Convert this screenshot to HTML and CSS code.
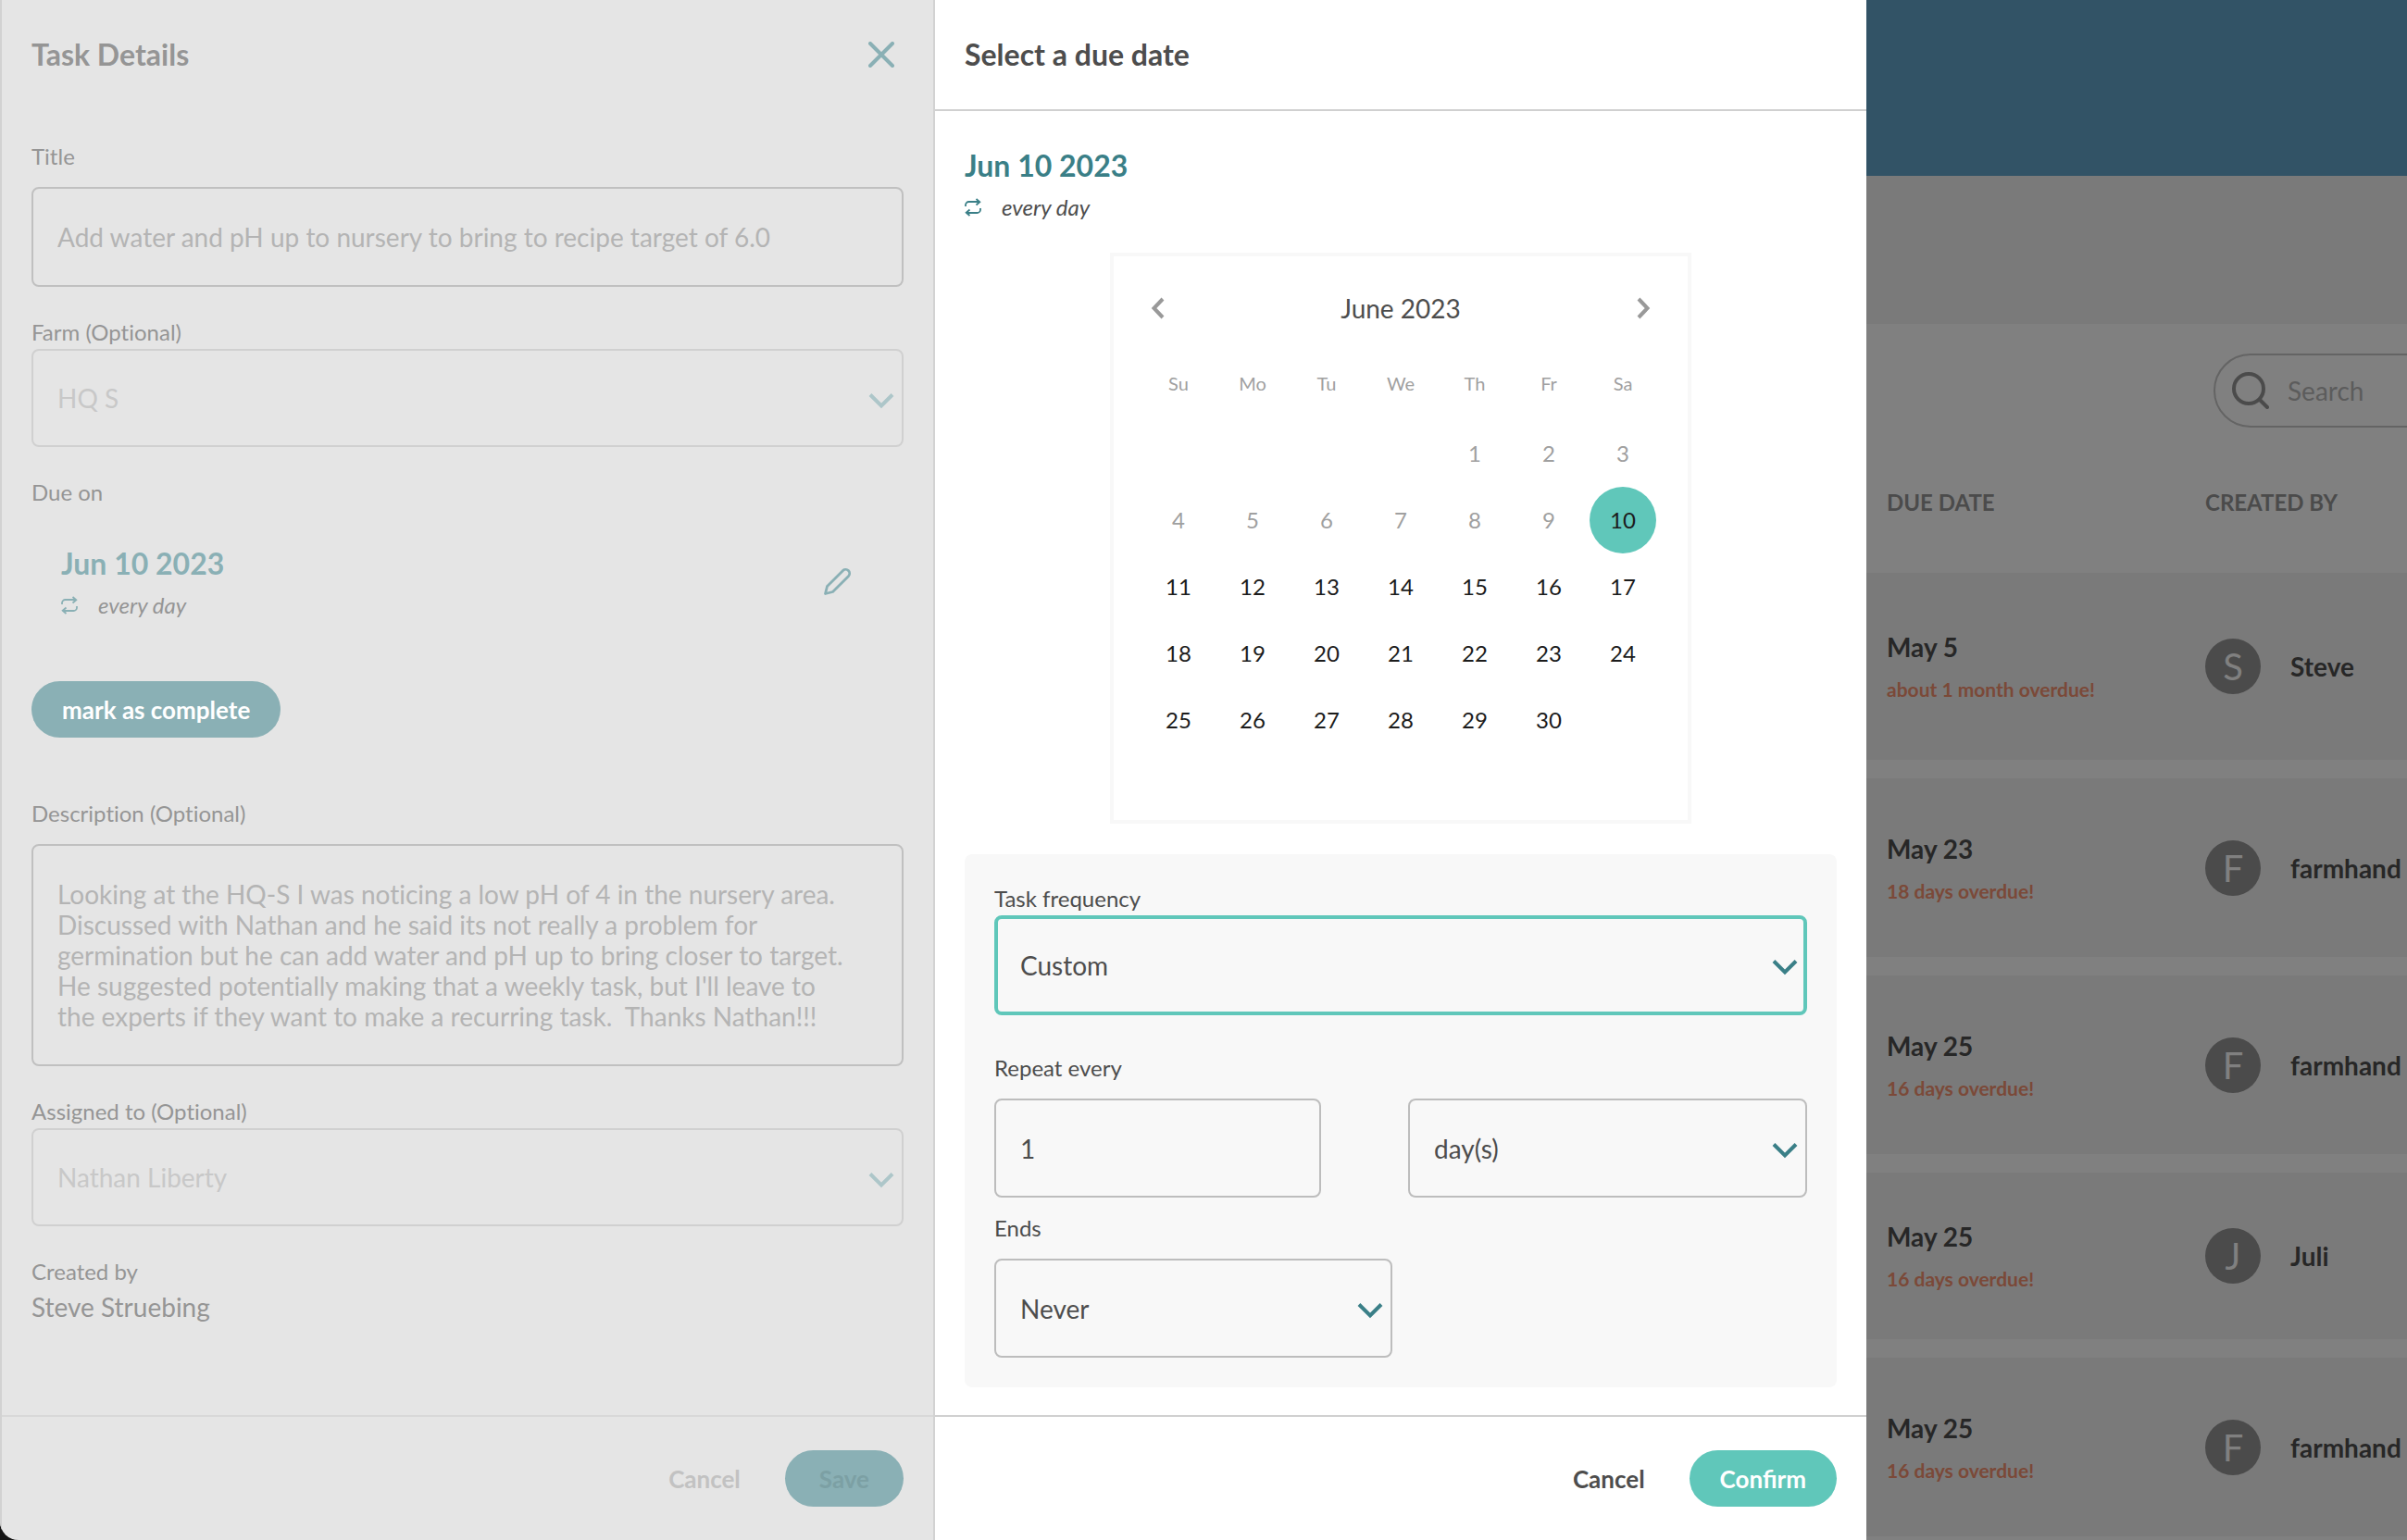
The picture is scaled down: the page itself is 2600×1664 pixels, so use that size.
FILE: index.html
```html
<!DOCTYPE html>
<html lang="en">
<head>
<meta charset="utf-8">
<title>Task Details</title>
<link rel="stylesheet" href="styles.css">
</head>
<body>
<svg class="sprite" aria-hidden="true">
  <symbol id="chevron" viewBox="0 0 28 18"><path d="M2 2.500l12 12 12-12" fill="none" stroke="currentColor" stroke-width="4"/></symbol>
  <symbol id="repeat" viewBox="0 0 18 20"><path d="M1 9V7.500A3.500 3.500 0 0 1 4.500 4H16M12.500 1L16.300 4.200 12.500 7.500M17 11v1.500A3.500 3.500 0 0 1 13.500 16H2M5.500 12.500L1.700 15.800 5.500 19" fill="none" stroke="currentColor" stroke-width="1.800"/></symbol>
</svg>
<div class="app">
  <aside class="drawer details">
    <header class="drawer-head">
      <h2>Task Details</h2>
      <button class="icon-button" type="button" aria-label="Close">
        <svg width="28" height="28" viewBox="0 0 28 28"><path d="M2 2l24 24M26 2L2 26" fill="none" stroke="currentColor" stroke-width="4" stroke-linecap="round"/></svg>
      </button>
    </header>
    <form class="drawer-body" id="task-form">
      <div class="field spaced">
        <label for="title">Title</label>
        <input class="control text" id="title" type="text" value="Add water and pH up to nursery to bring to recipe target of 6.0">
      </div>
      <div class="field">
        <label for="farm">Farm (Optional)</label>
        <div class="select">
          <select class="control" id="farm" disabled><option>HQ S</option></select>
          <svg class="chevron"><use href="#chevron"/></svg>
        </div>
      </div>
      <div class="due">
        <p class="label">Due on</p>
        <div class="due-row">
          <div class="summary">
            <p class="date">Jun 10 2023</p>
            <p class="repeat"><svg width="18" height="20"><use href="#repeat"/></svg><em>every day</em></p>
          </div>
          <button class="icon-button edit" type="button" aria-label="Edit due date">
            <svg width="30" height="30" viewBox="0 0 30 30"><path d="M1.500 28.500l2-8L20.600 3.400a4.250 4.250 0 0 1 6 6L9.500 26.500z" fill="none" stroke="currentColor" stroke-width="2.800" stroke-linejoin="round"/></svg>
          </button>
        </div>
        <button class="pill" type="button">mark as complete</button>
      </div>
      <div class="field spaced">
        <label for="description">Description (Optional)</label>
        <textarea class="control" id="description">Looking at the HQ-S I was noticing a low pH of 4 in the nursery area. Discussed with Nathan and he said its not really a problem for germination but he can add water and pH up to bring closer to target. He suggested potentially making that a weekly task, but I'll leave to the experts if they want to make a recurring task.  Thanks Nathan!!!</textarea>
      </div>
      <div class="field">
        <label for="assignee">Assigned to (Optional)</label>
        <div class="select">
          <select class="control" id="assignee" disabled><option>Nathan Liberty</option></select>
          <svg class="chevron"><use href="#chevron"/></svg>
        </div>
      </div>
      <div class="creator">
        <p class="label">Created by</p>
        <p class="value">Steve Struebing</p>
      </div>
    </form>
    <footer class="drawer-foot">
      <button class="plain" type="button">Cancel</button>
      <button class="pill" type="submit" form="task-form" disabled>Save</button>
    </footer>
  </aside>

  <section class="drawer picker">
    <header class="drawer-head">
      <h2>Select a due date</h2>
    </header>
    <form class="drawer-body" id="date-form">
      <div class="summary">
        <p class="date">Jun 10 2023</p>
        <p class="repeat"><svg width="18" height="20"><use href="#repeat"/></svg><em>every day</em></p>
      </div>
      <div class="calendar">
        <div class="month">
          <button class="icon-button" type="button" aria-label="Previous month"><svg width="16" height="24" viewBox="0 0 16 24"><path d="M13 2L3.500 12 13 22" fill="none" stroke="currentColor" stroke-width="4"/></svg></button>
          <span>June 2023</span>
          <button class="icon-button" type="button" aria-label="Next month"><svg width="16" height="24" viewBox="0 0 16 24"><path d="M3 2l9.500 10L3 22" fill="none" stroke="currentColor" stroke-width="4"/></svg></button>
        </div>
        <table class="days">
          <thead><tr><th>Su</th><th>Mo</th><th>Tu</th><th>We</th><th>Th</th><th>Fr</th><th>Sa</th></tr></thead>
          <tbody>
            <tr><td></td><td></td><td></td><td></td><td><button type="button" disabled>1</button></td><td><button type="button" disabled>2</button></td><td><button type="button" disabled>3</button></td></tr>
            <tr><td><button type="button" disabled>4</button></td><td><button type="button" disabled>5</button></td><td><button type="button" disabled>6</button></td><td><button type="button" disabled>7</button></td><td><button type="button" disabled>8</button></td><td><button type="button" disabled>9</button></td><td><button type="button" class="selected">10</button></td></tr>
            <tr><td><button type="button">11</button></td><td><button type="button">12</button></td><td><button type="button">13</button></td><td><button type="button">14</button></td><td><button type="button">15</button></td><td><button type="button">16</button></td><td><button type="button">17</button></td></tr>
            <tr><td><button type="button">18</button></td><td><button type="button">19</button></td><td><button type="button">20</button></td><td><button type="button">21</button></td><td><button type="button">22</button></td><td><button type="button">23</button></td><td><button type="button">24</button></td></tr>
            <tr><td><button type="button">25</button></td><td><button type="button">26</button></td><td><button type="button">27</button></td><td><button type="button">28</button></td><td><button type="button">29</button></td><td><button type="button">30</button></td><td></td></tr>
            <tr><td></td><td></td><td></td><td></td><td></td><td></td><td></td></tr>
          </tbody>
        </table>
      </div>
      <div class="frequency">
        <div class="field">
          <label for="frequency">Task frequency</label>
          <div class="select">
            <select class="control active" id="frequency"><option>Custom</option></select>
            <svg class="chevron"><use href="#chevron"/></svg>
          </div>
        </div>
        <div class="field spaced interval">
          <label for="count">Repeat every</label>
          <div class="interval-row">
            <input class="control" id="count" type="text" value="1">
            <div class="select">
              <select class="control" id="unit" aria-label="Repeat unit"><option>day(s)</option></select>
              <svg class="chevron"><use href="#chevron"/></svg>
            </div>
          </div>
        </div>
        <div class="field spaced">
          <label for="ends">Ends</label>
          <div class="select half">
            <select class="control" id="ends"><option>Never</option></select>
            <svg class="chevron"><use href="#chevron"/></svg>
          </div>
        </div>
      </div>
    </form>
    <footer class="drawer-foot">
      <button class="plain" type="button">Cancel</button>
      <button class="pill" type="submit" form="date-form">Confirm</button>
    </footer>
  </section>

  <main class="list">
    <div class="banner"></div>
    <div class="toolbar"></div>
    <label class="search">
      <svg width="40" height="40" viewBox="0 0 40 40"><circle cx="18" cy="18" r="16" fill="none" stroke="currentColor" stroke-width="4"/><path d="M30 30l8 8" stroke="currentColor" stroke-width="4" stroke-linecap="round"/></svg>
      <input type="search" placeholder="Search" aria-label="Search">
    </label>
    <table class="tasks">
      <thead><tr><th>DUE DATE</th><th>CREATED BY</th></tr></thead>
      <tbody>
        <tr class="tall"><td><p>May 5</p><p class="overdue">about 1 month overdue!</p></td><td><div class="person"><span class="avatar">S</span>Steve</div></td></tr>
        <tr><td><p>May 23</p><p class="overdue">18 days overdue!</p></td><td><div class="person"><span class="avatar">F</span>farmhand</div></td></tr>
        <tr><td><p>May 25</p><p class="overdue">16 days overdue!</p></td><td><div class="person"><span class="avatar">F</span>farmhand</div></td></tr>
        <tr class="short"><td><p>May 25</p><p class="overdue">16 days overdue!</p></td><td><div class="person"><span class="avatar">J</span>Juli</div></td></tr>
        <tr><td><p>May 25</p><p class="overdue">16 days overdue!</p></td><td><div class="person"><span class="avatar">F</span>farmhand</div></td></tr>
      </tbody>
    </table>
  </main>
</div>
</body>
</html>
```
FILE: styles.css
```css
* { box-sizing: border-box; }

body {
  margin: 0;
  background: #151515;
  color: #4d4d4d;
  font: 28px/36px Lato, "Open Sans", sans-serif;
  font-variant-ligatures: none;
}

h2, p { margin: 0; }

button, input, select, textarea {
  font: inherit;
  font-variant-ligatures: inherit;
  color: inherit;
}

button {
  padding: 0;
  border: 0;
  background: none;
}

.sprite {
  position: absolute;
  width: 0;
  height: 0;
}

.app {
  display: grid;
  grid-template-columns: 1010fr 1006fr 584fr;
  min-height: 100vh;
  overflow: hidden;
  border-bottom-left-radius: 20px;
}

/* Drawers */
.drawer {
  --accent: #3a7f87;
  --line: #bdbdbd;
  --rule: #d0d0d0;
  display: flex;
  flex-direction: column;
  min-width: 0;
  background: #fff;
}

.details {
  --accent: #8ab0b5;
  --line: #c0c0c0;
  border: solid #d2d2d2;
  border-width: 0 2px;
  background: #e5e5e5;
  color: #959595;
}

.drawer-head {
  display: flex;
  align-items: center;
  justify-content: space-between;
  height: 120px;
  padding: 0 32px;
  border-bottom: 2px solid var(--rule);
}

.details .drawer-head {
  padding-right: 42px;
  border-color: transparent;
}

.drawer-head h2 {
  font-size: 32px;
  line-height: 40px;
  font-weight: 700;
}

.icon-button {
  display: flex;
  align-items: center;
  justify-content: center;
  color: var(--accent);
}

.drawer-body {
  flex: 1;
  padding: 33px 32px 29px;
}

.picker .drawer-body { padding-top: 39px; }

.drawer-foot {
  display: flex;
  justify-content: flex-end;
  gap: 48px;
  padding: 36px 32px;
  border-top: 2px solid var(--rule);
}

.details .drawer-foot { border-color: #d8d8d8; }

.plain, .pill {
  height: 61px;
  font-size: 26px;
  line-height: 32px;
  font-weight: 700;
  font-variant-ligatures: normal;
}

.pill {
  padding: 0 33px;
  border-radius: 31px;
  background: #60c7ba;
  color: #fff;
}

.details .pill { background: var(--accent); }
.details .pill:disabled { padding: 0 37px; color: #7ca0a4; }
.details .plain { color: #c2c2c2; }

/* Form fields */
.field {
  display: flex;
  flex-direction: column;
  gap: 2px;
}

.field.spaced { gap: 17px; }

label, .label {
  font-size: 24px;
  line-height: 32px;
}

.control {
  display: block;
  width: 100%;
  height: 107px;
  padding: 0 26px;
  border: 2px solid var(--line);
  border-radius: 8px;
  outline: 0;
  background: transparent;
  appearance: none;
}

.control.text { height: 108px; }

.control.active {
  height: 108px;
  padding: 0 24px;
  border: 4px solid #60c7ba;
}

.details .control { color: #b4b4b4; }

.control:disabled {
  height: 106px;
  border-color: #d0d0d0;
  opacity: 1;
}

.details .control:disabled { color: #c8c8c8; }

textarea.control {
  height: 240px;
  padding: 36px 52px 36px 26px;
  line-height: 33px;
  resize: none;
  overflow: hidden;
}

.select { position: relative; }

.chevron {
  position: absolute;
  right: 10px;
  top: 47px;
  width: 28px;
  height: 18px;
  color: var(--accent);
  pointer-events: none;
}

.details .chevron { color: #adc6c9; }

.details .field { margin-bottom: 33px; }

.date {
  color: var(--accent);
  font-size: 32px;
  line-height: 40px;
  font-weight: 700;
}

.repeat {
  display: flex;
  align-items: center;
  gap: 22px;
  margin-top: 9px;
  font-size: 24px;
  line-height: 32px;
}

.repeat svg { color: var(--accent); }

.due-row {
  display: flex;
  align-items: center;
  justify-content: space-between;
  margin: 41px 56px 66px 32px;
}

.edit { padding-bottom: 4px; }

.due { margin-bottom: 66px; }
.creator .value { margin-top: 4px; }

/* Date picker */
.calendar {
  width: 628px;
  margin: 33px auto;
  border: 4px solid #f8f8f8;
}

.month {
  display: flex;
  align-items: center;
  justify-content: space-between;
  height: 112px;
  padding: 0 28px;
}

.month .icon-button {
  width: 40px;
  height: 40px;
  color: #999;
}

.days {
  width: 560px;
  margin: 0 auto;
  border-collapse: collapse;
  table-layout: fixed;
  font-size: 24px;
  line-height: 32px;
  text-align: center;
}

.days th {
  height: 65px;
  padding: 0 0 15px;
  color: #a0a0a0;
  font-size: 20px;
  font-weight: 400;
}

.days td {
  height: 72px;
  padding: 0;
}

.days button {
  width: 72px;
  height: 72px;
  border-radius: 50%;
  color: #1c1c1c;
  vertical-align: top;
}

.days button:disabled { color: #a0a0a0; }
.days .selected { background: #60c7ba; }

.frequency {
  padding: 32px;
  border-radius: 8px;
  background: #f8f8f8;
}

.interval { margin: 41px 0 17px; }

.interval-row {
  display: grid;
  grid-template-columns: 353fr 431fr;
  gap: 94px;
}

.half { width: 49%; }

/* Task list behind the drawers */
.list {
  min-width: 0;
  overflow: hidden;
  background: #808080;
  color: #272727;
}

.banner {
  height: 190px;
  background: #325366;
}

.toolbar {
  height: 160px;
  background: #7a7a7a;
}

.search {
  display: flex;
  align-items: center;
  gap: 20px;
  width: 480px;
  height: 80px;
  margin: 32px 0 0 375px;
  padding: 0 18px;
  border: 2px solid #646464;
  border-radius: 40px;
  color: #4b4b4b;
}

.search input {
  width: 360px;
  padding: 0;
  border: 0;
  outline: 0;
  background: none;
  font-size: 28px;
}

.search input::placeholder { color: #5c5c5c; opacity: 1; }

.tasks {
  width: 100%;
  margin-bottom: -20px;
  border-spacing: 0 20px;
  table-layout: fixed;
  font-weight: 700;
}

.tasks th {
  height: 117px;
  padding: 4px 0 0;
  color: #4b4b4b;
  font-size: 24px;
  line-height: 32px;
  text-align: left;
}

.tasks th:first-child {
  width: 366px;
  padding-left: 22px;
}

.tasks td {
  height: 193px;
  padding: 0;
  background: #7a7a7a;
}

.tasks td:first-child { padding: 2px 0 0 22px; }
.tasks .tall td { height: 202px; }
.tasks .short td { height: 180px; }

.overdue {
  margin-top: 12px;
  color: #7b4938;
  font-size: 21px;
  line-height: 32px;
}

.person {
  display: flex;
  align-items: center;
  gap: 32px;
}

.avatar {
  display: grid;
  place-items: center;
  width: 60px;
  height: 60px;
  border-radius: 50%;
  background: #4b4b4b;
  color: #808080;
  font-size: 40px;
  font-weight: 400;
}
```
